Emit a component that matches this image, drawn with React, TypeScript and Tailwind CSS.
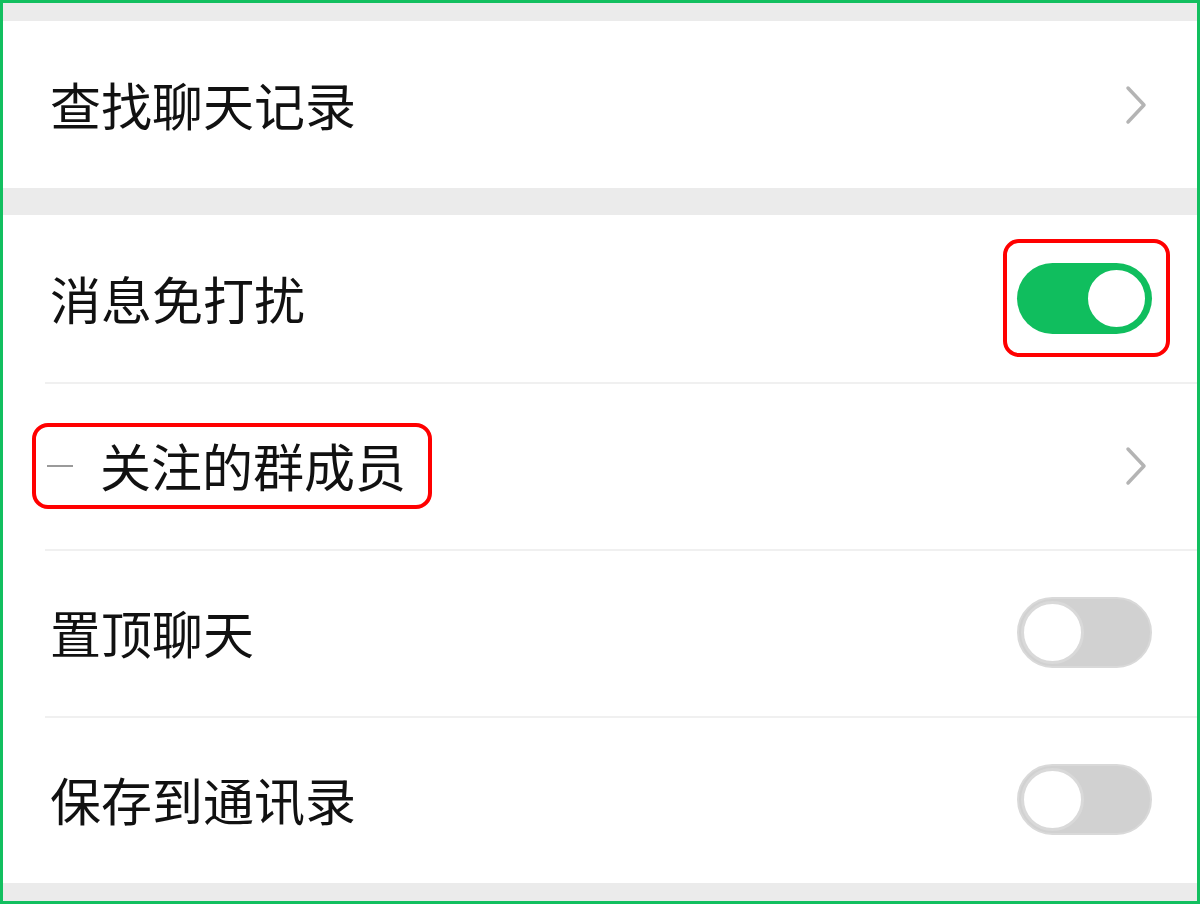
import React from "react";

const font = { fontFamily: '"Noto Sans CJK SC", "Noto Sans", sans-serif' };

function Chevron() {
  return (
    <svg width="24" height="40" viewBox="0 0 24 40" className="mr-[49px]" aria-hidden>
      <path d="M4 3 L20 20 L4 37" fill="none" stroke="#b4b4b4" strokeWidth="3.5" strokeLinecap="round" strokeLinejoin="round" />
    </svg>
  );
}

function Toggle({ on }: { on: boolean }) {
  if (on) {
    return (
      <div className="flex h-[71px] w-[135px] items-center justify-end rounded-full bg-[#10be5e] p-[4px]">
        <div className="h-[63px] w-[63px] rounded-full border-[3px] border-[#10be5e] bg-white" />
      </div>
    );
  }
  return (
    <div className="flex h-[71px] w-[135px] items-center justify-start rounded-full border-2 border-[#d9d9d9] bg-[#d1d1d1] p-[2px]">
      <div className="h-[63px] w-[63px] rounded-full border-[3px] border-[#d9d9d9] bg-white" />
    </div>
  );
}

function Row({
  label,
  right,
  divider,
  children,
}: {
  label?: string;
  right: React.ReactNode;
  divider?: boolean;
  children?: React.ReactNode;
}) {
  return (
    <div className="relative flex h-[167px] shrink-0 items-center justify-between bg-white">
      {divider && <div className="absolute left-[42px] right-0 top-0 h-[2px] bg-[#f0f0f0]" />}
      {children ?? <span className="ml-[47px] text-[51px] leading-none text-[#111111]">{label}</span>}
      {right}
    </div>
  );
}

export default function App() {
  return (
    <div
      className="flex h-[904px] w-[1200px] flex-col overflow-hidden border-[3px] border-[#12bf5f] bg-[#ebebeb]"
      style={font}
    >
      <div className="h-[18px] shrink-0 bg-[#ebebeb]" />
      <Row label="查找聊天记录" right={<Chevron />} />
      <div className="h-[27px] shrink-0 bg-[#ebebeb]" />
      <Row
        label="消息免打扰"
        right={
          <div className="relative mr-[45px]">
            <Toggle on />
            <div className="absolute -left-[14px] -top-[24px] h-[118px] w-[167px] rounded-[16px] border-[4px] border-[#ff0000]" />
          </div>
        }
      />
      <Row divider right={<Chevron />}>
        <div className="relative ml-[44px] flex items-center">
          <div className="h-[2px] w-[26px] bg-[#9a9a9a]" />
          <span className="ml-[27px] text-[51px] leading-none text-[#111111]">关注的群成员</span>
          <div className="absolute -left-[15px] -right-[26px] -top-[17px] -bottom-[18px] rounded-[16px] border-[4px] border-[#ff0000]" />
        </div>
      </Row>
      <Row divider label="置顶聊天" right={<div className="mr-[45px]"><Toggle on={false} /></div>} />
      <Row divider label="保存到通讯录" right={<div className="mr-[45px]"><Toggle on={false} /></div>} />
      <div className="flex-1 bg-[#ebebeb]" />
    </div>
  );
}
